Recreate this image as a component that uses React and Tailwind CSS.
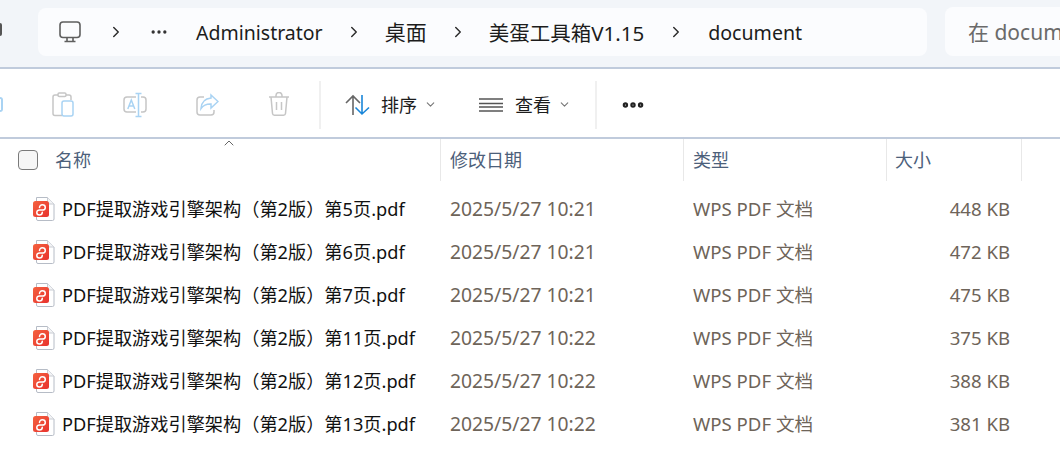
import { ChevronDown, ChevronRight, ChevronUp, Ellipsis } from "lucide-react";

const FONT = "font-['Noto_Sans','Noto_Sans_CJK_SC',sans-serif]";

const files = [
  { name: "PDF提取游戏引擎架构（第2版）第5页.pdf", date: "2025/5/27 10:21", size: "448 KB" },
  { name: "PDF提取游戏引擎架构（第2版）第6页.pdf", date: "2025/5/27 10:21", size: "472 KB" },
  { name: "PDF提取游戏引擎架构（第2版）第7页.pdf", date: "2025/5/27 10:21", size: "475 KB" },
  { name: "PDF提取游戏引擎架构（第2版）第11页.pdf", date: "2025/5/27 10:22", size: "375 KB" },
  { name: "PDF提取游戏引擎架构（第2版）第12页.pdf", date: "2025/5/27 10:22", size: "388 KB" },
  { name: "PDF提取游戏引擎架构（第2版）第13页.pdf", date: "2025/5/27 10:22", size: "381 KB" },
];

// breadcrumb separator
const Sep = ({ className = "" }) => (
  <ChevronRight size={18} strokeWidth={1.9} className={`text-[#2b2b2b] shrink-0 ${className}`} />
);

const MonitorIcon = () => (
  <svg width="24" height="24" viewBox="0 0 24 24" fill="none" stroke="#5f5f5f" strokeWidth="1.6">
    <rect x="2" y="2" width="20" height="15.5" rx="3" />
    <path d="M9 18v3M15 18v3M6.5 21.5h11" />
  </svg>
);

const CopyIcon = () => (
  <svg width="24" height="26" viewBox="0 0 24 26" fill="none" strokeWidth="1.5">
    <path d="M11 23.5H4a2 2 0 0 1-2-2V5a2 2 0 0 1 2-2h14a2 2 0 0 1 2 2v3" stroke="#c6c6c6" />
    <rect x="7" y="1" width="8" height="3.5" rx="1.2" stroke="#c6c6c6" fill="#fff" />
    <rect x="11" y="9" width="11" height="15" rx="2" stroke="#a9d3f3" fill="#fff" />
  </svg>
);

const RenameIcon = () => (
  <svg width="26" height="26" viewBox="0 0 26 26" fill="none" strokeWidth="1.5">
    <path d="M14 5H5a3 3 0 0 0-3 3v9a3 3 0 0 0 3 3h9M19 5h2a3 3 0 0 1 3 3v9a3 3 0 0 1-3 3h-2" stroke="#c6c6c6" />
    <path d="M16.5 2v22M13.5 1.5h6M13.5 24.5h6M5.8 17l3.5-9 3.500 9M7 14h4.600" stroke="#a9d3f3" />
  </svg>
);

const ShareIcon = () => (
  <svg width="24" height="24" viewBox="0 0 24 24" fill="none" strokeWidth="1.5">
    <path d="M9 4H5a3 3 0 0 0-3 3v12a3 3 0 0 0 3 3h11a3 3 0 0 0 3-3v-2" stroke="#c6c6c6" />
    <path d="M16 2l7 6.500-7 6.500v-4c-4.500-.2-7.500 1-10 4.500.5-6 4-10 10-10.500z" stroke="#a9d3f3" />
  </svg>
);

const TrashIcon = () => (
  <svg width="22" height="25" viewBox="0 0 22 25" fill="none" stroke="#c6c6c6" strokeWidth="1.5">
    <path d="M1 5h20M8 5V3.500a2.500 2.500 0 0 1 6 0V5M3 5l1.500 16.500a2 2 0 0 0 2 1.800h9a2 2 0 0 0 2-1.800L19 5M8.500 10v8M13.500 10v8" />
  </svg>
);

const SortIcon = () => (
  <svg width="26" height="22" viewBox="0 0 26 22" fill="none" strokeWidth="1.6">
    <path d="M8 21V2M1 9l7-7 7 7" stroke="#666" />
    <path d="M17 1v19M10.500 13.500l6.500 6.500 7-6.500" stroke="#1a86d9" />
  </svg>
);

const ListIcon = () => (
  <svg width="24" height="14" viewBox="0 0 24 14" fill="none" stroke="#555" strokeWidth="1.4">
    <path d="M0 1h24M0 5.500h24M0 9h24M0 13h24" />
  </svg>
);

const PdfIcon = () => (
  <svg width="22" height="24" viewBox="0 0 22 24" fill="none" className="shrink-0">
    <defs>
      <linearGradient id="pdfRed" x1="0" y1="0" x2="1" y2="1">
        <stop offset="0" stopColor="#f4623f" />
        <stop offset="1" stopColor="#e8322e" />
      </linearGradient>
    </defs>
    <path d="M3.500 .5h11l6.500 6.500v15a1.500 1.500 0 0 1-1.500 1.500H5a1.500 1.500 0 0 1-1.500-1.500z" fill="#fff" stroke="#b6bcc6" strokeWidth="1" />
    <path d="M14.500 .5V7H21" fill="#f3f4f6" stroke="#c8ccd3" strokeWidth="1" />
    <g transform="translate(0 4)">
      <rect x="0" y="0" width="16" height="16" rx="2.500" fill="url(#pdfRed)" />
      <path
        d="M6.500 6.500C6.500 4.800 7.800 3.800 9.300 3.800 11 3.800 12.300 5 12.300 6.400 12.300 8 11 9 9.300 9H6.600C5 9 3.800 10 3.800 11.500 3.800 13 5 14 6.400 14 8 14 9.300 12.800 9.300 11.200"
        stroke="#fff"
        strokeWidth="1.500"
        strokeLinecap="round"
      />
    </g>
  </svg>
);

const ToolbarDivider = () => <div className="w-[2px] h-[48px] bg-[#f0f0f0] shrink-0" />;

const HeaderCell = ({ children, className = "" }) => (
  <div className={`h-full border-r border-[#e8e8e8] flex items-center text-[#4c607a] text-[18px] ${className}`}>
    {children}
  </div>
);

export default function App() {
  return (
    <div className={`w-[1060px] h-[466px] bg-white overflow-hidden ${FONT}`}>
      {/* address bar */}
      <div className="h-[69px] bg-[#f2f5f9] border-b-2 border-[#c0cbdc] flex pt-[8px]">
        {/* edge of the clipped back button */}
        <div className="w-[2px] h-[13px] mt-[15px] bg-[#555] rounded-r-sm shrink-0" />
        <div className="ml-[36px] w-[889px] h-[48px] bg-[#fbfcfe] rounded-lg flex items-center pl-[20px] text-[#1c1c1c] whitespace-nowrap">
          <MonitorIcon />
          <Sep className="ml-[25px]" />
          <Ellipsis size={20} strokeWidth={2} className="ml-[24px] text-[#333]" />
          <span className="ml-[27px] pt-[2px] text-[19.5px]">Administrator</span>
          <Sep className="ml-[22px]" />
          <span className="ml-[22px] pt-[2px] text-[21px]">桌面</span>
          <Sep className="ml-[22px]" />
          <span className="ml-[22px] pt-[2px] text-[20.5px]">美蛋工具箱V1.15</span>
          <Sep className="ml-[23px]" />
          <span className="ml-[23px] pt-[2px] text-[19.6px]">document</span>
        </div>
        <div className="ml-[18px] flex-1 h-[49px] -mt-px bg-[#fbfcfe] rounded-l-lg flex items-center pl-[23px] pt-[2px] text-[21px] text-[#6a6a6a] whitespace-nowrap overflow-hidden">
          在 document
        </div>
      </div>

      {/* toolbar */}
      <div className="h-[70px] border-b-2 border-[#c0cbdc] flex items-center text-[18px] text-[#1c1c1c] pt-[3px]">
        {/* edge of the clipped cut button */}
        <div className="w-[3px] h-[15px] border-2 border-l-0 border-[#a9d3f3] rounded-r-[4px] shrink-0" />
        <div className="ml-[48px]"><CopyIcon /></div>
        <div className="ml-[47px]"><RenameIcon /></div>
        <div className="ml-[47px]"><ShareIcon /></div>
        <div className="ml-[49px]"><TrashIcon /></div>
        <div className="ml-[29px]"><ToolbarDivider /></div>
        <div className="ml-[24px]"><SortIcon /></div>
        <span className="ml-[10px] pt-[1px]">排序</span>
        <ChevronDown size={13} className="ml-[7px] text-[#777]" />
        <div className="ml-[42px]"><ListIcon /></div>
        <span className="ml-[12px] pt-[1px]">查看</span>
        <ChevronDown size={13} className="ml-[7px] text-[#777]" />
        <div className="ml-[24px]"><ToolbarDivider /></div>
        <Ellipsis size={26} strokeWidth={3} className="ml-[23px] text-[#222]" />
      </div>

      {/* column headers */}
      <div className="relative h-[42px] grid grid-cols-[441px_243px_203px_135px]">
        <ChevronUp size={16} strokeWidth={1.5} className="absolute left-[221px] -top-[4px] text-[#666]" />
        <HeaderCell className="pl-[18px]">
          <span className="w-[20px] h-[20px] rounded-[4px] border border-[#7a7a7a] bg-[#f6f6f6] mr-[17px]" />
          名称
        </HeaderCell>
        <HeaderCell className="pl-[9px]">修改日期</HeaderCell>
        <HeaderCell className="pl-[9px]">类型</HeaderCell>
        <HeaderCell className="pl-[8px]">大小</HeaderCell>
      </div>

      {/* rows */}
      <div className="flex flex-col pt-[7px]">
        {files.map((f) => (
          <div key={f.name} className="h-[43px] grid grid-cols-[441px_243px_203px_123px] items-center">
            <div className="flex items-center pl-[33px] text-[18.2px] text-[#111] whitespace-nowrap">
              <PdfIcon />
              <span className="ml-[7px]">{f.name}</span>
            </div>
            <div className="pl-[9px] text-[19.3px] text-[#6e6459]">{f.date}</div>
            <div className="pl-[9px] pb-[2px] text-[18.6px] text-[#6e6459]">WPS PDF 文档</div>
            <div className="pb-[2px] text-right text-[18.6px] text-[#6e6459]">{f.size}</div>
          </div>
        ))}
      </div>
    </div>
  );
}
